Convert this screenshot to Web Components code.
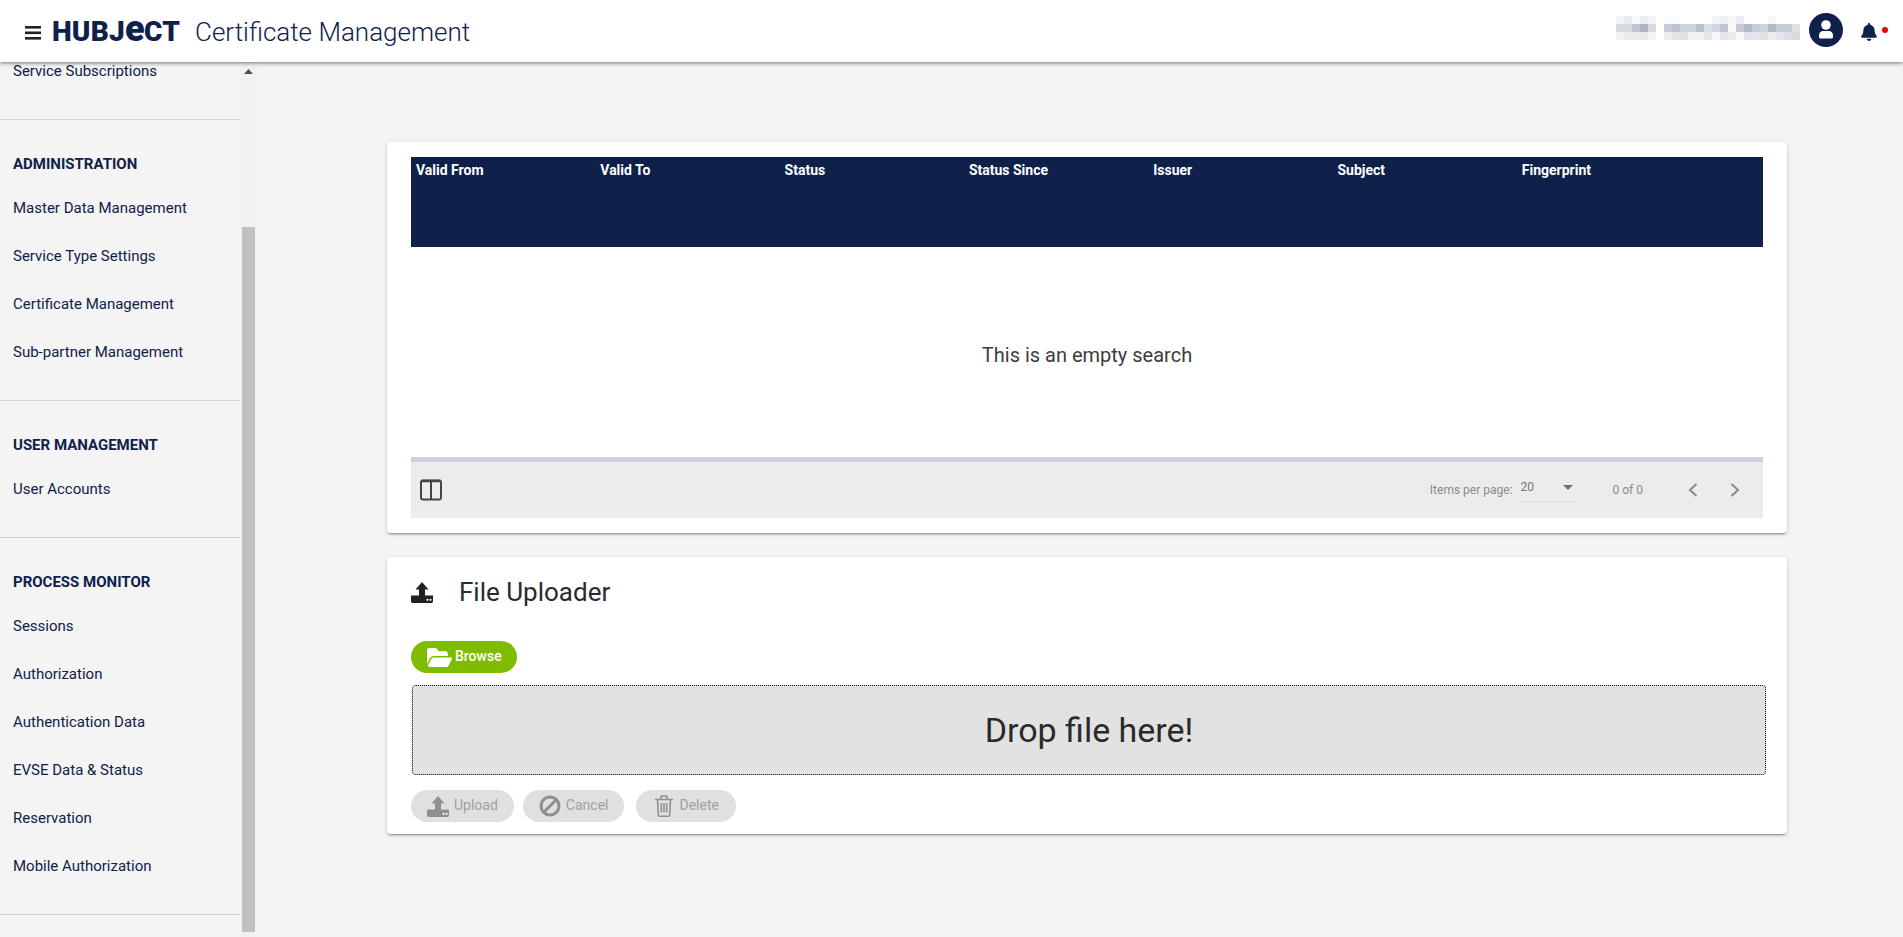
<!DOCTYPE html>
<html lang="en">
<head>
<meta charset="utf-8">
<title>Certificate Management</title>
<style>
  html, body { margin: 0; height: 100%; overflow: hidden; background: #f4f4f4; }
  body { font-family: Roboto, "Liberation Sans", sans-serif; display: flex; flex-direction: column; }
</style>
</head>
<body>
<app-header title-text="Certificate Management"></app-header>
<page-body>
  <side-nav>
    <nav-section headless>
      <nav-item>Service Subscriptions</nav-item>
    </nav-section>
    <nav-section heading="ADMINISTRATION">
      <nav-item>Master Data Management</nav-item>
      <nav-item>Service Type Settings</nav-item>
      <nav-item>Certificate Management</nav-item>
      <nav-item>Sub-partner Management</nav-item>
    </nav-section>
    <nav-section heading="USER MANAGEMENT">
      <nav-item>User Accounts</nav-item>
    </nav-section>
    <nav-section heading="PROCESS MONITOR">
      <nav-item>Sessions</nav-item>
      <nav-item>Authorization</nav-item>
      <nav-item>Authentication Data</nav-item>
      <nav-item>EVSE Data &amp; Status</nav-item>
      <nav-item>Reservation</nav-item>
      <nav-item>Mobile Authorization</nav-item>
    </nav-section>
  </side-nav>
  <cert-table columns="Valid From,Valid To,Status,Status Since,Issuer,Subject,Fingerprint"></cert-table>
  <file-uploader></file-uploader>
</page-body>

<script>
const NAVY = "#0f214a";
const CARD_SHADOW = "0 3px 1px -2px rgba(0,0,0,.2), 0 2px 2px 0 rgba(0,0,0,.14), 0 1px 5px 0 rgba(0,0,0,.12)";

class AppHeader extends HTMLElement {
  connectedCallback() {
    const sr = this.attachShadow({ mode: "open" });
    sr.innerHTML = `
      <style>
        :host {
          display: flex;
          align-items: center;
          flex: none;
          height: 62px;
          padding: 0 15px 0 25px;
          background: #fff;
          position: relative;
          z-index: 2;
          box-shadow: 0 1px 4px rgba(0,0,0,.55);
          color: ${NAVY};
        }
        .menu { width: 16px; height: 14px; display: block; margin: 3px 11px 0 0; }
        .logo {
          font: 900 28px/1 Roboto, sans-serif;
          letter-spacing: .2px;
          width: 128px;
          white-space: nowrap;
          margin: 2px 15px 0 0;
        }
        .logo span { font-size: 36px; line-height: 0; font-weight: 900; letter-spacing: -.5px; }
        .title { font: 300 26px/1 Roboto, sans-serif; white-space: nowrap; flex: 1; margin-top: 2px; }
        blur-name { margin-top: -6px; }
        .avatar { width: 34px; height: 34px; display: block; margin: -2px 18px 0 9px; }
        .bell { width: 16px; height: 18px; display: block; margin: 2px 5px 0 0; }
        .dot { width: 6px; height: 6px; border-radius: 50%; background: #f00000; margin-top: -2px; }
      </style>
      <svg class="menu" viewBox="0 0 16 14" fill="#222"><rect y="0" width="16" height="2.6"/><rect y="5.5" width="16" height="2.6"/><rect y="11" width="16" height="2.6"/></svg>
      <div class="logo">HUBJ<span>e</span>CT</div>
      <div class="title">${this.getAttribute("title-text")}</div>
      <blur-name></blur-name>
      <svg class="avatar" viewBox="0 0 34 34"><circle cx="17" cy="17" r="17" fill="${NAVY}"/><circle cx="17" cy="12" r="4.8" fill="#fff"/><path d="M10 24.300v-2c0-2.700 2-4.300 4-4.300h6c2 0 4 1.600 4 4.300v2c0 .7-.5 1.200-1.200 1.200H11.200c-.7 0-1.200-.5-1.200-1.200z" fill="#fff"/></svg>
      <svg class="bell" viewBox="0 0 448 512" fill="${NAVY}"><path d="M224 512c35.320 0 63.970-28.650 63.970-64H160.030c0 35.350 28.650 64 63.970 64zm215.390-149.710c-19.320-20.760-55.470-51.990-55.470-154.290 0-77.700-54.480-139.900-127.940-155.160V32c0-17.670-14.320-32-31.980-32s-31.980 14.330-31.980 32v20.840C118.560 68.100 64.080 130.300 64.080 208c0 102.300-36.150 133.530-55.470 154.290-6 6.450-8.660 14.160-8.610 21.710.11 16.400 12.980 32 32.100 32h383.800c19.120 0 32-15.600 32.100-32 .05-7.550-2.610-15.270-8.610-21.710z"/></svg>
      <div class="dot"></div>
    `;
  }
}

// the user name is pixelated in the screenshot, so it is a grid of flat cells
class BlurName extends HTMLElement {
  connectedCallback() {
    const rows = [
      "f4f5f7 e9ebf0 f8f9fa ecedf1 f4f5f7 fff fbfbfc fbfbfc fff fff fff fdfdfd f3f4f6 eff0f3 f6f7f8 eceef2 fdfdfe fff fff f6f7f8 fff fff fff",
      "d8dbe4 d5d9e2 bfc4d2 aeb4c7 d6dae3 fff c8ccd8 bdc2d0 ced2dc ced2dc bcc1d0 dcdfe6 d2d5df bfc4d1 fafafb c6cad6 b5bacb c7cbd7 cfd3dc b5bacb c8ccd7 c8ccd7 dfe1e7",
      "f0f1f4 e9ebef e8eaee e7e9ee f3f4f6 fff eceef1 e2e4ea dde0e7 f0f1f3 f0f1f3 e4e6eb f6f6f8 e3e5ea e8eaee f7f8f9 e2e4ea e4e6ec e0e2e8 ecedf1 e4e6eb dcdfe6 d8dbe3"
    ];
    const cells = rows.join(" ").split(" ").map(c => `<i style="background:#${c}"></i>`).join("");
    const sr = this.attachShadow({ mode: "open" });
    sr.innerHTML = `
      <style>
        :host { display: grid; grid-template-columns: repeat(23, 8px); grid-auto-rows: 8px; }
        i { display: block; }
      </style>${cells}`;
  }
}

class PageBody extends HTMLElement {
  connectedCallback() {
    const sr = this.attachShadow({ mode: "open" });
    sr.innerHTML = `
      <style>
        :host { display: flex; flex: 1; min-height: 0; overflow: hidden; }
        .main {
          flex: 1;
          min-width: 0;
          display: flex;
          flex-direction: column;
          gap: 24px;
          padding: 80px 116px 0 130px;
        }
      </style>
      <slot name="nav"></slot>
      <div class="main"><slot></slot></div>
    `;
    this.querySelector("side-nav").slot = "nav";
  }
}

class SideNav extends HTMLElement {
  connectedCallback() {
    const sr = this.attachShadow({ mode: "open" });
    sr.innerHTML = `
      <style>
        :host { display: flex; flex: none; width: 257px; overflow: hidden; background: #f4f4f4; }
        .list { width: 240px; flex: none; margin-top: -15px; }
        .rail { width: 17px; flex: none; background: #f1f1f1; position: relative; margin-bottom: -1px; }
        .up { display: block; position: absolute; left: 4px; top: 7px; width: 9px; height: 5px; }
        .thumb { position: absolute; left: 2px; width: 13px; top: 165px; height: 705px; background: #c1c1c1; }
      </style>
      <div class="list"><slot></slot></div>
      <div class="rail">
        <svg class="up" viewBox="0 0 9 5" fill="#505050"><path d="M4.500 0L9 5H0z"/></svg>
        <div class="thumb"></div>
      </div>
    `;
  }
}

class NavSection extends HTMLElement {
  connectedCallback() {
    const sr = this.attachShadow({ mode: "open" });
    const head = this.hasAttribute("headless") ? "" : `<div class="head">${this.getAttribute("heading")}</div>`;
    sr.innerHTML = `
      <style>
        :host { display: block; padding-bottom: 24px; border-bottom: 1px solid #d3d3d3; color: ${NAVY}; }
        .head { font: 700 15px/24px Roboto, sans-serif; padding: 32px 13px 8px; }
      </style>
      ${head}
      <slot></slot>
    `;
  }
}

class NavItem extends HTMLElement {
  connectedCallback() {
    const sr = this.attachShadow({ mode: "open" });
    sr.innerHTML = `
      <style>
        :host { display: block; height: 48px; padding: 0 13px; font: 400 15px/48px Roboto, sans-serif; color: ${NAVY}; white-space: nowrap; }
      </style>
      <slot></slot>
    `;
  }
}

class CertTable extends HTMLElement {
  connectedCallback() {
    const cols = this.getAttribute("columns").split(",");
    const ths = cols.map(c => `<div class="th">${c}</div>`).join("");
    const sr = this.attachShadow({ mode: "open" });
    sr.innerHTML = `
      <style>
        :host {
          display: block;
          padding: 15px 24px;
          background: #fff;
          border-radius: 4px;
          box-shadow: ${CARD_SHADOW};
        }
        .thead {
          display: grid;
          grid-template-columns: repeat(7, 184.3px) 1fr;
          height: 90px;
          background: ${NAVY};
          color: #fff;
          font: 700 14px/18px Roboto, sans-serif;
        }
        .th { padding: 4px 5px; }
        .empty {
          height: 210px;
          display: flex;
          align-items: center;
          justify-content: center;
          padding-top: 6px;
          box-sizing: border-box;
          font: 400 20px/1 Roboto, sans-serif;
          color: #3c3c3c;
        }
        .foot {
          height: 56px;
          display: flex;
          align-items: center;
          border-top: 5px solid #cfd0dc;
          background: #ececec;
          font: 400 12px/1 Roboto, sans-serif;
          color: #8a8a8a;
        }
        .cols { width: 22px; height: 22px; display: block; margin-left: 9px; flex: none; }
        .spacer { flex: 1; }
        .sel {
          width: 56px;
          height: 23px;
          margin: 0 36px 0 8px;
          border-bottom: 1px solid #dcdcdc;
          display: flex;
          justify-content: space-between;
          color: #757575;
          line-height: 16px;
          box-sizing: border-box;
        }
        .sel svg { width: 10px; height: 5px; margin: 6px 4px 0 0; }
        .range { margin-right: 45px; }
        .chev { width: 10px; height: 16px; display: block; }
        .chev + .chev { margin: 0 23px 0 32px; }
      </style>
      <div class="thead">${ths}</div>
      <div class="empty">This is an empty search</div>
      <div class="foot">
        <svg class="cols" viewBox="0 0 22 22" fill="none" stroke="#444" stroke-width="2"><rect x="1" y="1.500" width="20" height="19" rx="2"/><path d="M11 2v18"/><path d="M1 2h20" stroke-width="2.500"/></svg>
        <div class="spacer"></div>
        <span>Items per page:</span>
        <div class="sel"><span>20</span><svg viewBox="0 0 10 5" fill="#707070"><path d="M0 0h10L5 5z"/></svg></div>
        <span class="range">0 of 0</span>
        <svg class="chev" viewBox="0 0 10 16" fill="none" stroke="#8a8a8a" stroke-width="2"><path d="M8.500 2L2 8l6.500 6"/></svg>
        <svg class="chev" viewBox="0 0 10 16" fill="none" stroke="#8a8a8a" stroke-width="2"><path d="M1.500 2L8 8l-6.500 6"/></svg>
      </div>
    `;
  }
}

class PillButton extends HTMLElement {
  connectedCallback() {
    const sr = this.attachShadow({ mode: "open" });
    sr.innerHTML = `
      <style>
        :host {
          display: inline-flex;
          align-items: center;
          flex: none;
          box-sizing: border-box;
          height: 32px;
          padding: 0 16px;
          gap: 5px;
          border-radius: 16px;
          background: #e0e0e0;
          color: #a0a0a0;
          font: 400 14px/1 Roboto, sans-serif;
        }
        :host([primary]) { background: #7fbc00; color: #fff; font-weight: 500; gap: 3px; padding-right: 15px; }
        .label { margin-top: -2px; }
        ::slotted(svg) { display: block; flex: none; }
      </style>
      <slot name="icon"></slot>
      <span class="label"><slot></slot></span>
    `;
  }
}

const UPLOAD_ICON = fill => `<svg slot="icon" width="22" height="21" viewBox="0 0 22 21"><path fill="${fill}" d="M11 0l6.500 7.500H14V13.500h8v6c0 .8-.6 1.400-1.400 1.400H1.400C.6 20.900 0 20.300 0 19.500v-6h8V7.500H4.500z"/><circle cx="16.500" cy="17.800" r="1.100" fill="#fff"/><circle cx="19.500" cy="17.800" r="1.100" fill="#fff"/></svg>`;

class FileUploader extends HTMLElement {
  connectedCallback() {
    const sr = this.attachShadow({ mode: "open" });
    sr.innerHTML = `
      <style>
        :host {
          display: block;
          height: 277px;
          box-sizing: border-box;
          padding: 0 21px 12px 24px;
          background: #fff;
          border-radius: 4px;
          box-shadow: ${CARD_SHADOW};
        }
        .title {
          height: 84px;
          display: flex;
          align-items: center;
          gap: 26px;
          padding-bottom: 14px;
          box-sizing: border-box;
          font: 400 26px/1 Roboto, sans-serif;
          color: #2a2a2a;
        }
        .title svg { display: block; flex: none; }
        .drop {
          height: 90px;
          margin: 12px 0 15px 1px;
          box-sizing: border-box;
          border: 1px dotted #000;
          border-radius: 4px;
          background: #e2e2e2;
          display: flex;
          align-items: center;
          justify-content: center;
          font: 400 34px/1 Roboto, sans-serif;
          color: #2a2a2a;
        }
        .actions { display: flex; gap: 9px; }
        .browse { display: flex; }
        .del { margin-left: 3px; padding: 0 17px 0 18px; }
      </style>
      <div class="title">${UPLOAD_ICON("#222").replace('slot="icon" ', "")}<span>File Uploader</span></div>
      <div class="browse">
        <pill-button primary>
          <svg slot="icon" width="25" height="19" viewBox="0 64 576 384" preserveAspectRatio="none" fill="#fff"><path d="M572.694 292.093L500.270 416.248A63.997 63.997 0 0 1 444.989 448H45.025c-18.523 0-30.064-20.093-20.731-36.093l72.424-124.155A64 64 0 0 1 152 256h399.964c18.523 0 30.064 20.093 20.730 36.093zM152 224h328v-48c0-26.510-21.490-48-48-48H272l-64-64H48C21.490 64 0 85.490 0 112v278.046l69.077-118.418C86.214 242.250 117.989 224 152 224z"/></svg>
          Browse
        </pill-button>
      </div>
      <div class="drop">Drop file here!</div>
      <div class="actions">
        <pill-button>${UPLOAD_ICON("#8f8f8f")}Upload</pill-button>
        <pill-button>
          <svg slot="icon" width="22" height="22" viewBox="0 0 22 22" fill="none" stroke="#8f8f8f" stroke-width="3"><circle cx="11" cy="11" r="9"/><path d="M5 17L17 5"/></svg>
          Cancel
        </pill-button>
        <pill-button class="del">
          <svg slot="icon" width="20" height="22" viewBox="0 0 20 22" fill="none" stroke="#8f8f8f" stroke-width="1.600"><path d="M1 4.500h18M3.500 4.500l.8 15.500c0 .6.500 1.200 1.200 1.200h9c.7 0 1.200-.6 1.200-1.200l.8-15.500M7 4.500V2c0-.5.400-1 1-1h4c.6 0 1 .5 1 1v2.500M7.300 8v9.500M10 8v9.500M12.700 8v9.500"/></svg>
          Delete
        </pill-button>
      </div>
    `;
  }
}

customElements.define("app-header", AppHeader);
customElements.define("blur-name", BlurName);
customElements.define("page-body", PageBody);
customElements.define("side-nav", SideNav);
customElements.define("nav-section", NavSection);
customElements.define("nav-item", NavItem);
customElements.define("cert-table", CertTable);
customElements.define("pill-button", PillButton);
customElements.define("file-uploader", FileUploader);
</script>
</body>
</html>
